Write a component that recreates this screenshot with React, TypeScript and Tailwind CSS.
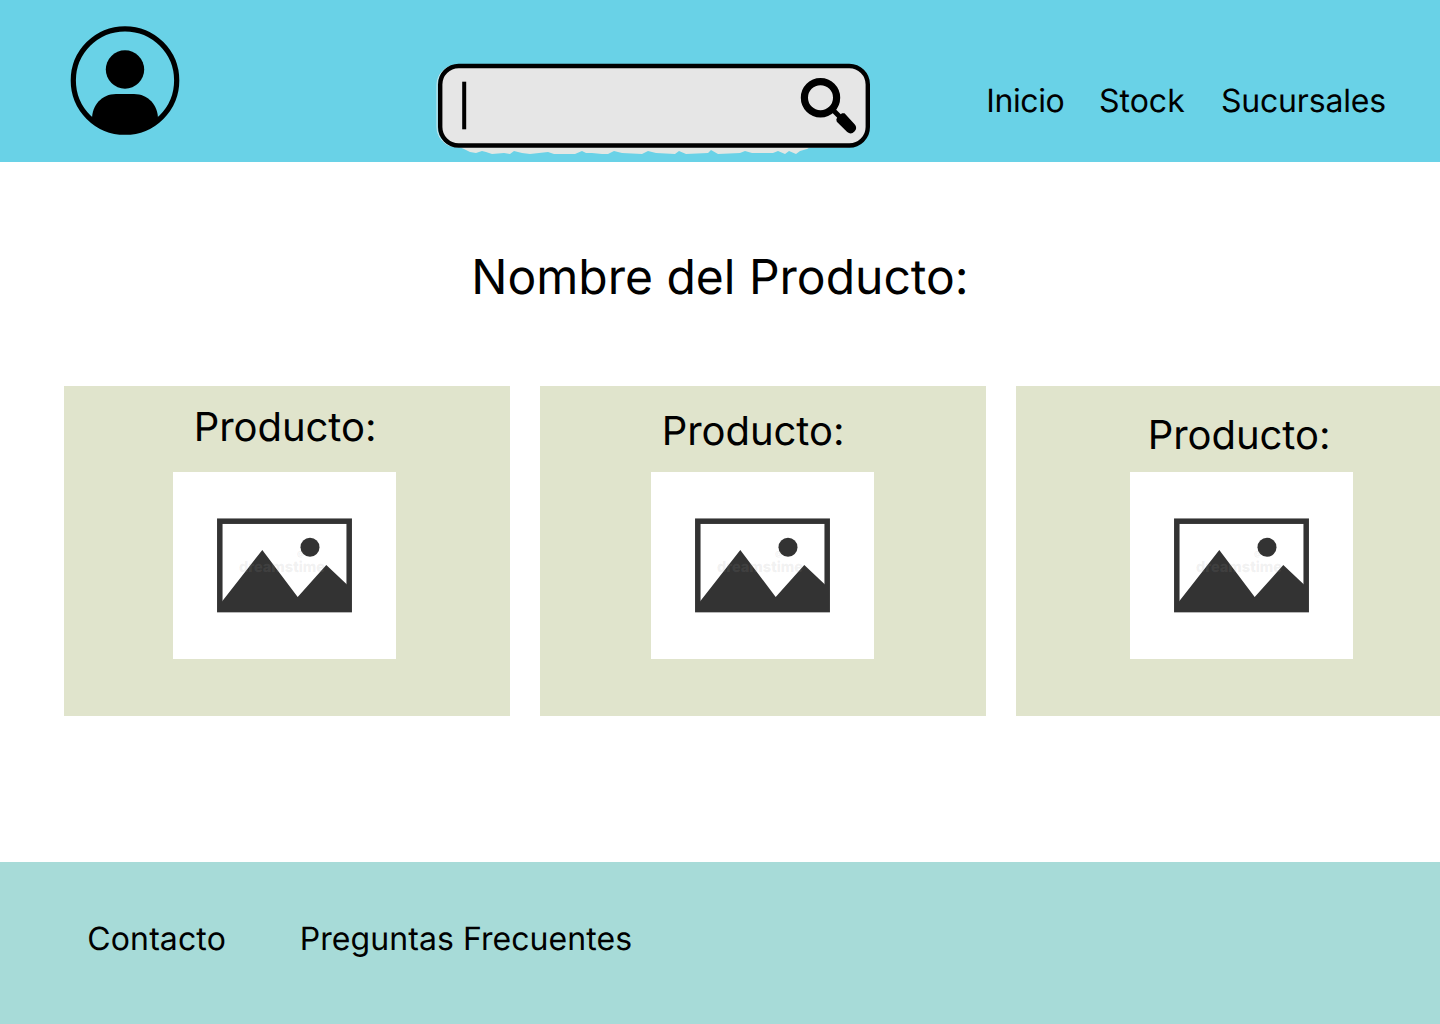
import React from "react";

function Avatar() {
  return (
    <svg width="110" height="110" viewBox="0 0 110 110" className="ml-[70px] mt-[25px] shrink-0" aria-label="Perfil">
      <defs>
        <clipPath id="disc">
          <circle cx="55" cy="55.5" r="53" />
        </clipPath>
      </defs>
      <circle cx="55" cy="55.5" r="51.7" fill="none" stroke="#000" strokeWidth="5.2" />
      <circle cx="55" cy="44.5" r="19.2" />
      <path clipPath="url(#disc)" d="M22 94C22 80 32 69 46 69H64C78 69 88 80 88 94V110H22Z" />
    </svg>
  );
}

function SearchBox() {
  return (
    <svg width="440" height="100" viewBox="0 0 440 100" className="ml-[252px] mt-[60px] shrink-0" aria-label="Buscar">
      <path
        fill="#e3e7e4"
        d="M25 86L32 89L38 92L44 93L50 91L54 92L60 94L72 93L78 94L82 91L90 93L98 94L116 92L122 94L143 94L150 91L154 93L160 93L170 94L176 94L182 91L190 93L210 94L216 91L224 93L243 94L247 91L254 94L276 93L279 90L286 94L308 93L313 91L320 93L341 93L346 91L353 94L357 91L364 94L368 91L375 89L380 86Z"
      />
      <rect x="5" y="5" width="428" height="82" rx="20" fill="none" stroke="#d5e8eb" strokeWidth="1" />
      <rect x="8.2" y="6" width="427.6" height="79.5" rx="18.5" fill="#e6e6e6" stroke="#000" strokeWidth="4.4" />
      <rect x="30.2" y="21.7" width="4" height="47.6" />
      <circle cx="388.5" cy="37.7" r="16.1" fill="none" stroke="#000" strokeWidth="7.2" />
      <path d="M400 49L410 59" stroke="#000" strokeWidth="5" />
      <path d="M404.3 59.5L405.3 57.3L410 53.2L412.5 53.2L422.6 64.2A5.4 5.4 0 0 1 415.2 72L404.8 61.8Z" />
    </svg>
  );
}

function Picture() {
  return (
    <svg width="223" height="187" viewBox="0 0 223 187" className="block bg-white">
      <rect x="46.8" y="49.2" width="129.4" height="88.4" fill="none" stroke="#333" strokeWidth="5.5" />
      <path fill="#333" d="M49 129.5L89.3 78L124.7 125L153.3 93L175 113.5V138H49Z" />
      <circle cx="137" cy="75.3" r="9.5" fill="#333" />
      <g fontFamily="Inter, sans-serif" fill="#999" fillOpacity="0.15">
        <text x="66" y="100" fontSize="15" fontWeight="800" textLength="86" lengthAdjust="spacingAndGlyphs">
          dreamstime
        </text>
        <text x="124" y="84" fontSize="7" fontWeight="700">@</text>
      </g>
    </svg>
  );
}

const cards = [
  { title: "ml-[129.7px] mt-[17px]", picture: "ml-[109px] mt-[21px]" },
  { title: "ml-[121.7px] mt-[21px]", picture: "ml-[111px] mt-[17px]" },
  { title: "ml-[131.7px] mt-[25px]", picture: "ml-[114px] mt-[13px]" },
];

export default function App() {
  return (
    <div className="flex h-[1024px] w-[1440px] flex-col overflow-hidden bg-white font-['Inter',sans-serif] text-black [text-rendering:geometricPrecision]">
      <header className="flex h-[162px] shrink-0 items-start bg-[#69d2e7]">
        <Avatar />
        <SearchBox />
        <nav className="ml-[114.3px] mt-[81px] flex whitespace-nowrap text-[32px] leading-[39px]">
          <a className="w-[112.7px] tracking-[-0.4px]">Inicio</a>
          <a className="w-[122px]">Stock</a>
          <a className="tracking-[-0.2px]">Sucursales</a>
        </nav>
      </header>
      <main className="flex h-[700px] shrink-0 flex-col">
        <h1 className="mt-[86px] text-center text-[48px] leading-[58px]">Nombre del Producto:</h1>
        <section className="ml-16 mt-20 flex gap-[30px]">
          {cards.map((card, i) => (
            <article key={i} className="h-[330px] w-[446px] shrink-0 bg-[#e0e4cc]">
              <h2 className={`${card.title} text-[40px] leading-[48px] tracking-[-0.05px]`}>Producto:</h2>
              <div className={card.picture}>
                <Picture />
              </div>
            </article>
          ))}
        </section>
      </main>
      <footer className="flex h-[162px] shrink-0 items-start bg-[#a7dbd8] pl-[87.3px] pt-[57px] text-[32px] leading-[39px]">
        <a className="w-[212.5px] tracking-[0.12px]">Contacto</a>
        <a className="tracking-[0.06px]">Preguntas Frecuentes</a>
      </footer>
    </div>
  );
}
